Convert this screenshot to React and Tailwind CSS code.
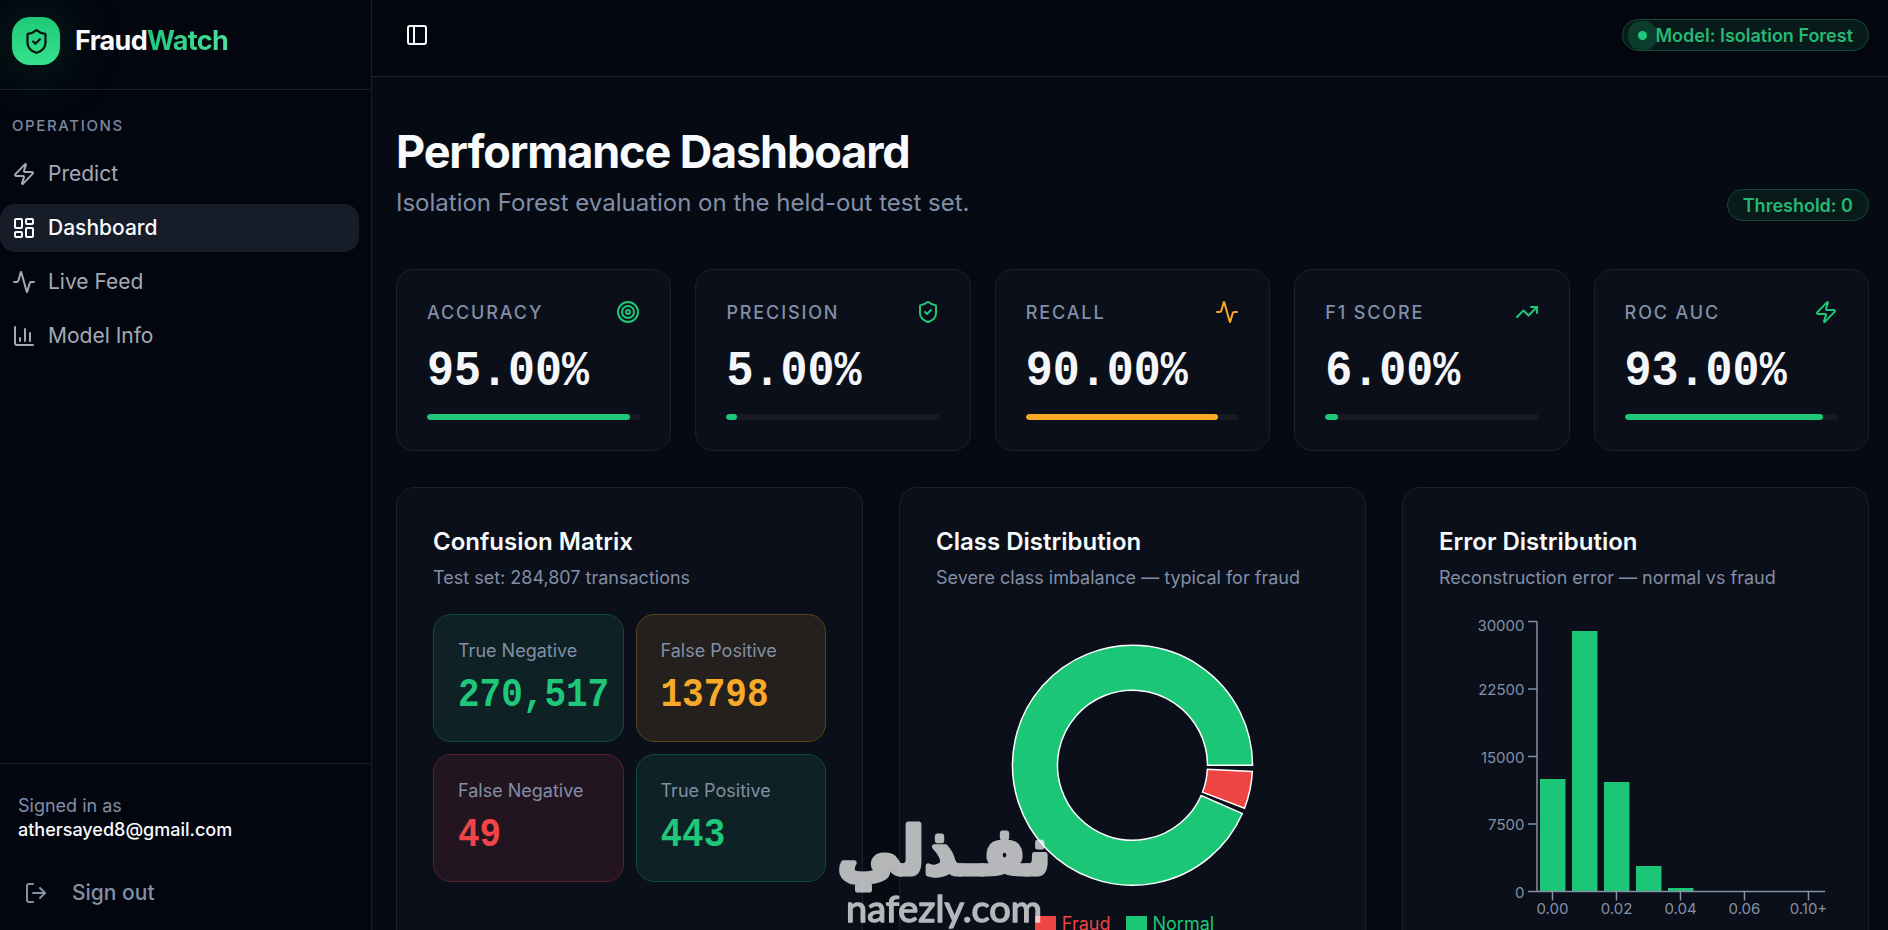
import {
  Activity,
  LayoutDashboard,
  LogOut,
  PanelLeft,
  ShieldCheck,
  Target,
  TrendingUp,
  Zap,
} from "lucide-react";

const navItems = [
  { title: "Predict", icon: Zap },
  { title: "Dashboard", icon: LayoutDashboard, active: true },
  { title: "Live Feed", icon: Activity },
  { title: "Model Info", icon: ModelInfoIcon },
];

const metrics = [
  { label: "Accuracy", value: 95, icon: Target },
  { label: "Precision", value: 5, icon: ShieldCheck },
  { label: "Recall", value: 90, icon: Activity, warn: true },
  { label: "F1 Score", value: 6, icon: TrendingUp },
  { label: "ROC AUC", value: 93, icon: Zap },
];

const matrix = [
  { label: "True Negative", value: "270,517", box: "border-[#13493f] bg-[#0e2125]", text: "text-[#1fc77a]" },
  { label: "False Positive", value: "13798", box: "border-[#5b431d] bg-[#24201d]", text: "text-[#f7a928]" },
  { label: "False Negative", value: "49", box: "border-[#5a1f30] bg-[#231520]", text: "text-[#f04548]" },
  { label: "True Positive", value: "443", box: "border-[#13493f] bg-[#0e2125]", text: "text-[#1fc77a]" },
];

const bars = [
  { x: 101, y: 165 },
  { x: 133, y: 17 },
  { x: 165, y: 168 },
  { x: 197, y: 252 },
  { x: 229, y: 274 },
];

const yTicks = [
  { label: "30000", y: 7.5, textY: 17 },
  { label: "22500", y: 75, textY: 80.5 },
  { label: "15000", y: 142.5, textY: 148.5 },
  { label: "7500", y: 210, textY: 215.5 },
  { label: "0", y: 277.5, textY: 283.5 },
];

const xTicks = ["0.00", "0.02", "0.04", "0.06", "0.10+"];

function ModelInfoIcon({ className }) {
  return (
    <svg viewBox="0 0 24 24" fill="none" stroke="currentColor" strokeWidth="2" strokeLinecap="round" strokeLinejoin="round" className={className}>
      <path d="M3 3v16a2 2 0 0 0 2 2h16" />
      <path d="M18 17V9" />
      <path d="M13 17V5" />
      <path d="M8 17v-3" />
    </svg>
  );
}

function sector(cx, cy, inner, outer, from, to) {
  const point = (r, deg) => {
    const rad = (deg * Math.PI) / 180;
    return `${cx + r * Math.cos(rad)} ${cy + r * Math.sin(rad)}`;
  };
  const large = to - from > 180 ? 1 : 0;
  return `M${point(outer, from)}A${outer} ${outer} 0 ${large} 1 ${point(outer, to)}L${point(inner, to)}A${inner} ${inner} 0 ${large} 0 ${point(inner, from)}Z`;
}

function Sidebar() {
  return (
    <aside className="flex w-[372px] shrink-0 flex-col border-r border-[#191d27] bg-[#03060e]">
      <div className="flex h-[90px] items-start gap-[15px] border-b border-[#191d27] px-3 pt-[17px]">
        <span className="grid size-12 place-items-center rounded-[18px] bg-linear-to-b from-[#1dc978] to-[#36e28d] shadow-[0_0_60px_rgba(29,201,120,0.25)]">
          <ShieldCheck className="mt-px size-[27px] text-[#04140f]" />
        </span>
        <span className="pt-[3px] text-[27px] leading-[42px] font-bold tracking-[-0.025em] text-[#f8fafc]">
          Fraud<span className="bg-linear-to-r from-[#1fc77a] to-[#48e39d] bg-clip-text text-transparent">Watch</span>
        </span>
      </div>

      <nav className="flex-1 pr-3 pt-3">
        <p className="flex h-12 items-center pl-3 text-[15px] font-medium tracking-[0.108em] text-[#7b88a1]">OPERATIONS</p>
        <ul className="flex flex-col gap-1.5">
          {navItems.map(({ title, icon: Icon, active }) => (
            <li
              key={title}
              className={
                active
                  ? "flex h-12 items-center gap-3 rounded-[15px] bg-[#161c28] px-3 text-[21px] font-medium text-[#f8fafc]"
                  : "flex h-12 items-center gap-3 rounded-[15px] px-3 text-[21px] text-[#a3aab6]"
              }
            >
              <Icon className="size-6" />
              {title}
            </li>
          ))}
        </ul>
      </nav>

      <div className="h-[167px] border-t border-[#191d27] px-[18px] pt-[30px] text-[18px] leading-6">
        <p className="text-[#828ea6]">Signed in as</p>
        <p className="font-medium text-[#f8fafc]">athersayed8@gmail.com</p>
        <div className="mt-[27px] flex h-12 items-center gap-6 pl-[6px] text-[21px] font-medium text-[#8290a8]">
          <LogOut className="size-6" />
          Sign out
        </div>
      </div>
    </aside>
  );
}

function MetricCard({ label, value, icon: Icon, warn }) {
  return (
    <div className="rounded-[18px] border border-[#1b212c] bg-[#0a0f19] p-[30px]">
      <div className="flex h-6 items-center justify-between">
        <span className="text-[18px] font-medium tracking-[0.104em] text-[#828ea6] uppercase">{label}</span>
        <Icon className={warn ? "size-6 text-[#f7a928]" : "size-6 text-[#1fc77a]"} />
      </div>
      <p className="mt-[18px] origin-center translate-y-1 scale-y-[1.12] font-['Liberation_Mono',monospace] text-[45px] leading-[54px] font-bold text-[#f4f6fa]">
        {value.toFixed(2)}%
      </p>
      <div className="mt-[18px] h-1.5 overflow-hidden rounded-full bg-[#151a24]">
        <div
          className={warn ? "h-full rounded-full bg-[#f7a928]" : "h-full rounded-full bg-[#1fc77a]"}
          style={{ width: `${value}%` }}
        />
      </div>
    </div>
  );
}

function Card({ title, subtitle, children }) {
  return (
    <section className="h-[520px] rounded-[18px] border border-[#1b212c] bg-[#0a0f19] p-9">
      <h2 className="text-[24px] leading-9 font-semibold text-[#f8fafc]">{title}</h2>
      <p className="mt-1.5 text-[18px] leading-6 text-[#828ea6]">{subtitle}</p>
      {children}
    </section>
  );
}

function ClassChart() {
  return (
    <div className="mt-6">
      <svg width="393" height="302" viewBox="0 0 393 302" className="block">
        <g stroke="#fff" strokeWidth="1.5">
          <path d={sector(196.5, 151.3, 75, 120, 3, 21)} fill="#ef4444" />
          <path d={sector(196.5, 151.3, 75, 120, 23.7, 360)} fill="#1cc677" />
        </g>
      </svg>
      <div className="flex justify-center gap-[15px] pr-4 text-[18px] leading-[16px]">
        <span className="flex gap-[6px] text-[#ef4444]">
          <i className="h-4 w-[21px] bg-[#ef4444]" />
          Fraud
        </span>
        <span className="flex gap-[6px] text-[#1cc677]">
          <i className="h-4 w-[21px] bg-[#1cc677]" />
          Normal
        </span>
      </div>
    </div>
  );
}

function ErrorChart() {
  return (
    <svg width="393" height="312" viewBox="0 0 393 312" className="mt-6">
      <g stroke="#0e131d" strokeDasharray="4.5 4.5" strokeWidth="1.5">
        {yTicks.map((t) => (
          <line key={t.label} x1="104" x2="386" y1={t.y} y2={t.y} />
        ))}
      </g>
      {bars.map((b) => (
        <rect key={b.x} x={b.x} y={b.y} width="25.5" height={277.5 - b.y} fill="#1cc677" />
      ))}
      <g stroke="#8490a6" strokeWidth="1.5">
        <line x1="98" x2="98" y1="7.5" y2="277.5" />
        <line x1="98" x2="386" y1="277.5" y2="277.5" />
        {yTicks.map((t) => (
          <line key={t.label} x1="89" x2="98" y1={t.y} y2={t.y} />
        ))}
        {xTicks.map((t, i) => (
          <line key={t} x1={113.5 + i * 64} x2={113.5 + i * 64} y1="277.5" y2="286.5" />
        ))}
      </g>
      <g fill="#8490a6" fontSize="15">
        {yTicks.map((t) => (
          <text key={t.label} x="85.5" y={t.textY} textAnchor="end">{t.label}</text>
        ))}
        {xTicks.map((t, i) => (
          <text key={t} x={113.5 + i * 64} y="300" textAnchor="middle">{t}</text>
        ))}
      </g>
    </svg>
  );
}

function Watermark() {
  return (
    <svg className="absolute top-[780px] left-[830px] opacity-70" width="230" height="150" viewBox="0 0 230 150" fill="#fff" stroke="#fff" strokeLinejoin="round">
      <text x="114" y="94" fontSize="66" fontWeight="700" fontFamily="DejaVu Sans" strokeWidth="5" textAnchor="middle" textLength="213" lengthAdjust="spacingAndGlyphs">
        نفـذلي
      </text>
      <text x="16" y="142" fontSize="37" fontFamily="Lato" strokeWidth="1.4" textLength="196" lengthAdjust="spacingAndGlyphs">
        nafezly.com
      </text>
    </svg>
  );
}

export default function App() {
  return (
    <div className="relative flex h-[930px] overflow-hidden bg-[#060a12] font-['Inter',sans-serif]">
      <Sidebar />
      <div className="flex min-w-0 flex-1 flex-col">
        <header className="flex h-[77px] shrink-0 items-start justify-between border-b border-[#1d212d] bg-[#04060f] pr-[19px] pl-[33px]">
          <PanelLeft className="mt-[23px] size-6 text-[#f8fafc]" />
          <span className="mt-[19px] flex h-8 items-center gap-[9px] rounded-full border border-[#14493a] bg-[#081a19] pr-[15px] pl-[15px] text-[18px] font-semibold text-[#25b875]">
            <span className="size-[9px] rounded-full bg-[#1fc77a] shadow-[0_0_0_10px_rgba(29,201,120,0.2)]" />
            Model: Isolation Forest
          </span>
        </header>

        <main className="pt-12 pr-[19px] pl-6">
          <div className="flex items-end justify-between">
            <div>
              <h1 className="text-[45px] leading-[54px] font-bold tracking-[-0.025em] text-[#f8fafc]">Performance Dashboard</h1>
              <p className="mt-1.5 text-[24px] leading-9 text-[#828ea6]">Isolation Forest evaluation on the held-out test set.</p>
            </div>
            <span className="flex h-8 items-center rounded-full border border-[#14493a] bg-[#081a19] px-[15px] text-[18px] font-semibold text-[#25b875]">
              Threshold: 0
            </span>
          </div>

          <div className="mt-12 grid grid-cols-5 gap-6">
            {metrics.map((m) => (
              <MetricCard key={m.label} {...m} />
            ))}
          </div>

          <div className="mt-9 grid grid-cols-3 gap-9">
            <Card title="Confusion Matrix" subtitle="Test set: 284,807 transactions">
              <div className="mt-6 grid grid-cols-2 gap-3">
                {matrix.map((cell) => (
                  <div key={cell.label} className={`h-32 rounded-[18px] border p-6 ${cell.box}`}>
                    <p className="text-[18px] leading-6 text-[#828ea6]">{cell.label}</p>
                    <p className={`mt-1.5 origin-center translate-y-[3px] scale-y-[1.12] font-['Liberation_Mono',monospace] text-[36px] leading-[48px] font-bold ${cell.text}`}>
                      {cell.value}
                    </p>
                  </div>
                ))}
              </div>
            </Card>
            <Card title="Class Distribution" subtitle="Severe class imbalance — typical for fraud">
              <ClassChart />
            </Card>
            <Card title="Error Distribution" subtitle="Reconstruction error — normal vs fraud">
              <ErrorChart />
            </Card>
          </div>
        </main>
      </div>
      <Watermark />
    </div>
  );
}
